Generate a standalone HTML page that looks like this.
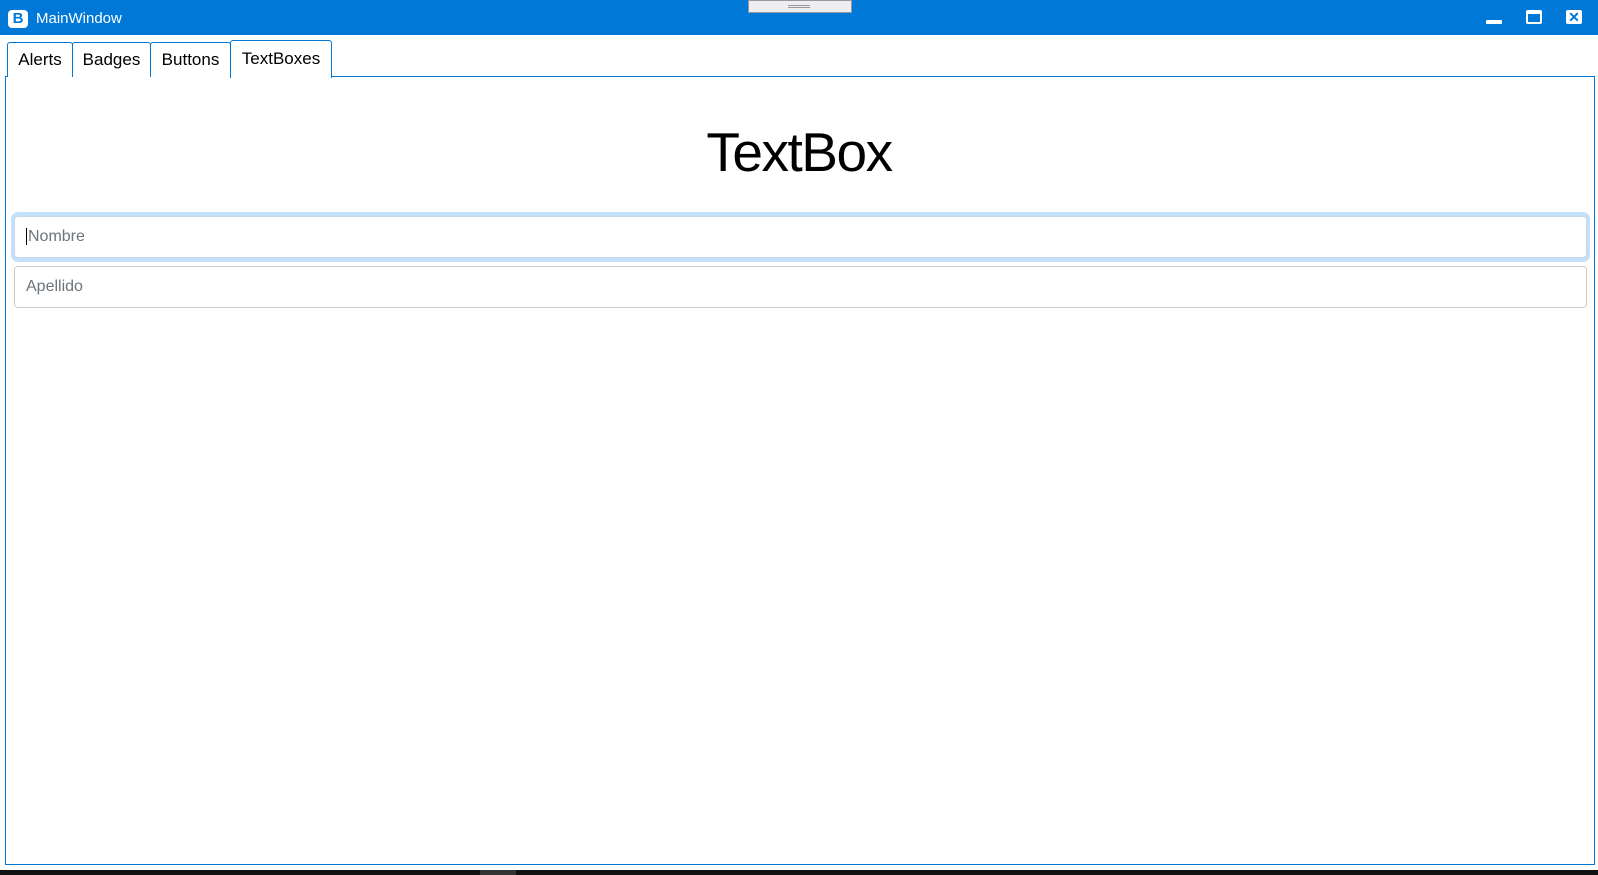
<!DOCTYPE html>
<html><head><style>
*{margin:0;padding:0;box-sizing:border-box}
body{width:1598px;height:875px;background:#fff;position:relative;overflow:hidden;font-family:"Liberation Sans",sans-serif}
.abs{position:absolute}
.tab{position:absolute;top:42px;height:35px;border:1px solid #0078d7;border-bottom:none;border-radius:3px 3px 0 0;background:#fff;font-size:17px;color:#000;text-align:center;line-height:33px}
.tb{position:absolute;left:14px;width:1573px;border:1px solid #ccc;border-radius:4px;background:#fff;font-size:15px;color:#6c757d;padding-left:11px}
</style></head><body>
<div class="abs" style="left:0;top:0;width:1598px;height:35px;background:#0078d7"></div>
<div class="abs" style="left:8px;top:10px;width:20px;height:18px;background:#fff;border-radius:4px;color:#0078d7;font-weight:bold;font-size:15px;text-align:center;line-height:18px">B</div>
<div class="abs" style="left:36px;top:10px;color:#fff;font-size:15px">MainWindow</div>
<div class="abs" style="left:748px;top:0;width:104px;height:13px;background:#eeeef2;border:1px solid #999"></div>
<div class="abs" style="left:788px;top:5px;width:22px;height:3px;border-top:1px solid #999;border-bottom:1px solid #999"></div>
<div class="abs" style="left:1486px;top:20px;width:16px;height:4px;background:#fff;border-radius:1px"></div>
<div class="abs" style="left:1526px;top:10px;width:16px;height:14px;border:2px solid #fff;border-top-width:4px;border-radius:2px"></div>
<div class="abs" style="left:1566px;top:10px;width:16px;height:14px;background:#fff;border-radius:2px;color:#0078d7;font-size:14px;font-weight:bold;text-align:center;line-height:14px">✕</div>
<div class="abs" style="left:5px;top:76px;width:1590px;height:789px;border:1px solid #0078d7"></div>
<div class="tab" style="left:7px;width:66px">Alerts</div>
<div class="tab" style="left:72px;width:79px">Badges</div>
<div class="tab" style="left:150px;width:81px">Buttons</div>
<div class="tab" style="left:230px;width:102px;top:40px;height:38px;line-height:36px">TextBoxes</div>
<div class="abs" style="left:0;width:1598px;top:120px;text-align:center;font-size:55px;letter-spacing:-1.5px;color:#000;font-weight:normal">TextBox</div>
<div class="abs" style="left:11px;top:212px;width:1579px;height:50px;background:#c5e1f9;border-radius:7px"></div>
<div class="tb" style="top:216px;height:42px;line-height:40px;border-color:#c8d8e8;font-size:16px"><span style="border-left:1px solid #000;padding-left:1px">Nombre</span></div>
<div class="tb" style="top:266px;height:42px;line-height:40px;font-size:16px">Apellido</div>
<div class="abs" style="left:0;top:870px;width:1598px;height:5px;background:#111"></div>
<div class="abs" style="left:480px;top:870px;width:36px;height:5px;background:#333"></div>
</body></html>
